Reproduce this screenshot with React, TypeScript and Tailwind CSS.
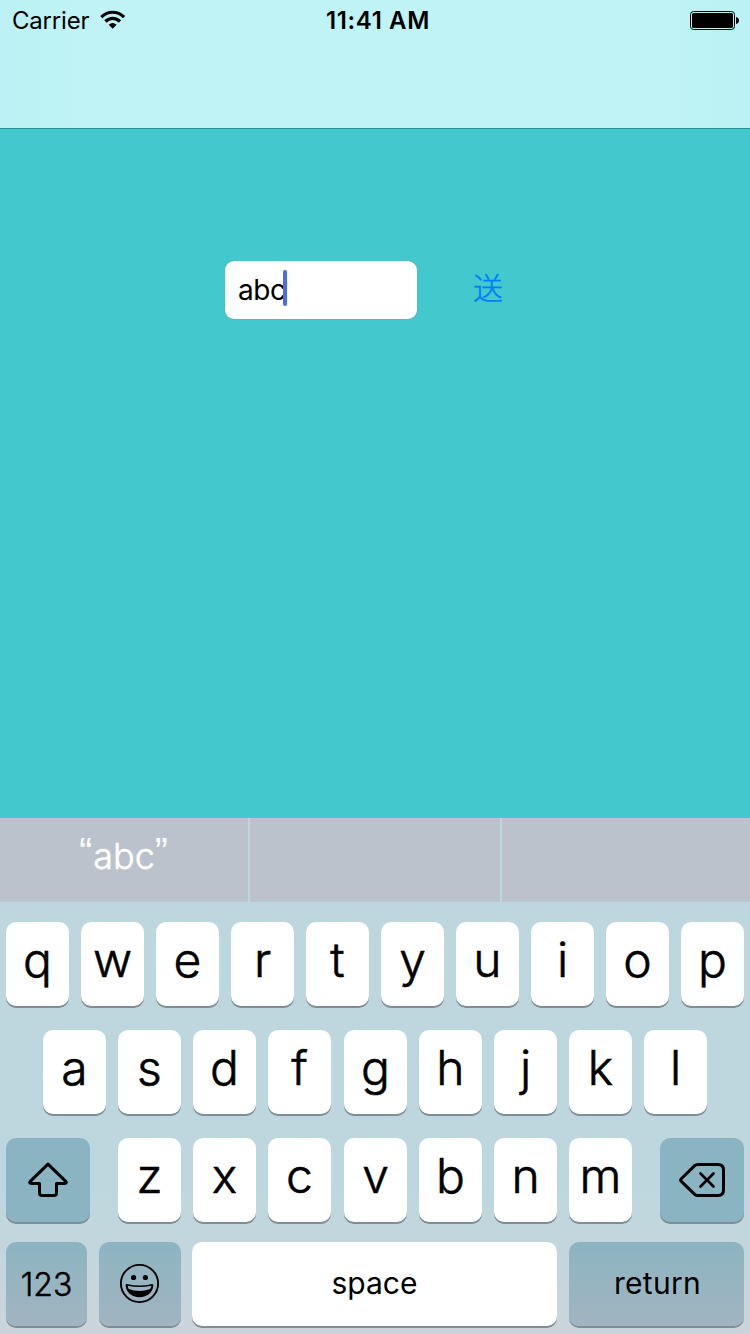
import type { ReactNode } from "react";
import clsx from "clsx";

const keyBase = "flex h-[84px] shrink-0 justify-center rounded-[10px] shadow-[0_2px_0_#7f8d94]";

function Letter({ children, className }: { children: string; className?: string }) {
  return (
    <button className={clsx(keyBase, "w-[63px] bg-white text-[48px] leading-[75px] font-light [-webkit-text-stroke:0.6px_black]", className)}>
      {children}
    </button>
  );
}

function FnKey({ children, className }: { children: ReactNode; className: string }) {
  return <button className={clsx(keyBase, className)}>{children}</button>;
}

function Quote({ children }: { children: string }) {
  return (
    <span className="relative -top-[4px] font-['Liberation_Sans'] text-[39px] leading-none tracking-[1px] [-webkit-text-stroke:0px]">
      {children}
    </span>
  );
}

function StatusBar() {
  return (
    <div className="grid h-10 grid-cols-3 text-[24px] leading-[42px]">
      <div className="flex pl-[12px]">
        <span className="w-[88px] tracking-[-0.2px]">Carrier</span>
        <svg className="mt-[10px] h-5 w-[26px]" viewBox="0 0 26 20" fill="none" stroke="#000">
          <path d="M1.3 7.1C8 .6 17.4 .6 24.1 7.1" strokeWidth="3.2" />
          <path d="M5.4 11.5C9.6 7.4 15.8 7.4 20 11.5" strokeWidth="3.2" />
          <path d="M8.7 14.7Q12.7 11.5 16.6 14.7L12.7 18.8Z" fill="#000" stroke="none" />
        </svg>
      </div>
      <div className="pl-[6px] text-center font-semibold tracking-[0.6px]">11:41 AM</div>
      <div className="flex justify-end pt-[11px] pr-[11px]">
        <svg className="h-[19px] w-[49px]" viewBox="0 0 49 19">
          <rect x=".5" y=".5" width="44" height="18" rx="3" fill="none" stroke="#000" />
          <rect x="2" y="2" width="41" height="15" rx="1.5" />
          <path d="M46 6C50 6.5 50 12.5 46 13Z" />
        </svg>
      </div>
    </div>
  );
}

function Keyboard() {
  return (
    <div className="h-[516px] bg-[linear-gradient(#bed7de_0%,#bed7de_72%,#cbd4db_100%)]">
      <div className="flex h-[84px] gap-[2px]">
        <div className="w-[248px] bg-[#bbc2cb] text-center text-[36px] leading-[76px] font-light text-white [-webkit-text-stroke:0.5px_white]">
          <Quote>“</Quote>abc<Quote>”</Quote>
        </div>
        <div className="w-[250px] bg-[#bbc2cb]" />
        <div className="w-[248px] bg-[#bbc2cb]" />
      </div>
      <div className="flex gap-3 px-[6px] pt-5">
        {"qwertyuiop".split("").map((c) => (
          <Letter key={c}>{c}</Letter>
        ))}
      </div>
      <div className="flex gap-3 pt-6 pl-[43px]">
        {"asdfghjkl".split("").map((c) => (
          <Letter key={c} className={c === "g" ? "ml-px" : ""}>{c}</Letter>
        ))}
      </div>
      <div className="flex justify-between px-[6px] pt-6">
        <FnKey className="w-[84px] bg-[#8ab4c2]">
          <svg className="h-[84px] w-[84px]" viewBox="0 0 84 84" fill="none" stroke="#000" strokeWidth="3" strokeLinejoin="round">
            <path d="M42 26.2L60 43.6Q61 45.5 58.7 45.5H50.5V55Q50.5 57.5 48 57.5H36Q33.5 57.5 33.5 55V45.5H25.3Q23 45.5 24 43.6Z" />
          </svg>
        </FnKey>
        <div className="flex gap-3">
          {"zxcvbnm".split("").map((c) => (
            <Letter key={c} className={c === "v" ? "ml-px" : ""}>{c}</Letter>
          ))}
        </div>
        <FnKey className="w-[84px] bg-[#8ab4c2]">
          <svg className="h-[84px] w-[84px]" viewBox="0 0 84 84" fill="none" stroke="#000" strokeWidth="3" strokeLinejoin="round" strokeLinecap="round">
            <path d="M38 26.5H58Q63.5 26.5 63.5 32V52Q63.5 57.5 58 57.5H38Q36 57.5 34.7 56.3L21.3 43.3Q20 42 21.3 40.7L34.7 27.7Q36 26.5 38 26.5Z" />
            <path d="M40.5 35.5L53.5 48.5M53.5 35.5L40.5 48.5" strokeWidth="2.7" />
          </svg>
        </FnKey>
      </div>
      <div className="flex px-[6px] pt-5">
        <FnKey className="mr-3 w-[81px] bg-[linear-gradient(#8db4c1,#a1b4c1)] text-[32px] leading-[86px] font-light [-webkit-text-stroke:0.5px_black]">123</FnKey>
        <FnKey className="mr-[11px] w-[82px] bg-[linear-gradient(#8db4c1,#a1b4c1)]">
          <svg className="h-[84px] w-[82px]" viewBox="0 0 82 84">
            <circle cx="40.5" cy="41.5" r="18.6" fill="none" stroke="#000" strokeWidth="1.9" />
            <circle cx="34.6" cy="35.5" r="2.6" />
            <circle cx="46.4" cy="35.5" r="2.6" />
            <path fillRule="evenodd" d="M28 42Q40.5 45 53 42Q54.6 41.8 54.4 43.5C53.8 50.5 48.2 55.2 40.5 55.2S27.2 50.5 26.6 43.5Q26.4 41.8 28 42ZM28.7 43.8Q28.9 45.5 29.8 46.9Q40.5 51 51.2 46.9Q52.1 45.5 52.3 43.8Q40.5 46.2 28.7 43.8Z" />
          </svg>
        </FnKey>
        <FnKey className="mr-3 w-[365px] bg-white text-[30px] leading-[83px]">space</FnKey>
        <FnKey className="w-[175px] bg-[linear-gradient(#8db4c1,#a1b4c1)] pl-[2px] text-[30px] leading-[83px] tracking-[0.3px]">return</FnKey>
      </div>
    </div>
  );
}

export default function App() {
  return (
    <div className="flex h-[1334px] w-[750px] flex-col overflow-hidden bg-[#42c8cd] font-['Inter','Noto_Sans_CJK_JP',sans-serif] text-black">
      <header className="h-[129px] border-b border-[#2f8f94] bg-[linear-gradient(90deg,#bcf2f5,#c0f3f6_15%,#c0f3f6_85%,#bcf2f5)]">
        <StatusBar />
      </header>
      <main className="flex h-[689px] items-start pt-[132px] pl-[225px]">
        <div className="flex h-[58px] w-[192px] rounded-[9px] bg-white pl-[13px] text-[28px] leading-[58px] shadow-[0_0_1px_#777]">
          <span className="w-[45px] tracking-[-0.4px]">abc</span>
          <span className="mt-[9px] h-9 w-1 rounded-full bg-[#476cf2]" />
        </div>
        <button className="ml-[56px] h-[54px] text-[30px] leading-[54px] font-light text-[#007aff] [-webkit-text-stroke:0.4px_#007aff]">送</button>
      </main>
      <Keyboard />
    </div>
  );
}
